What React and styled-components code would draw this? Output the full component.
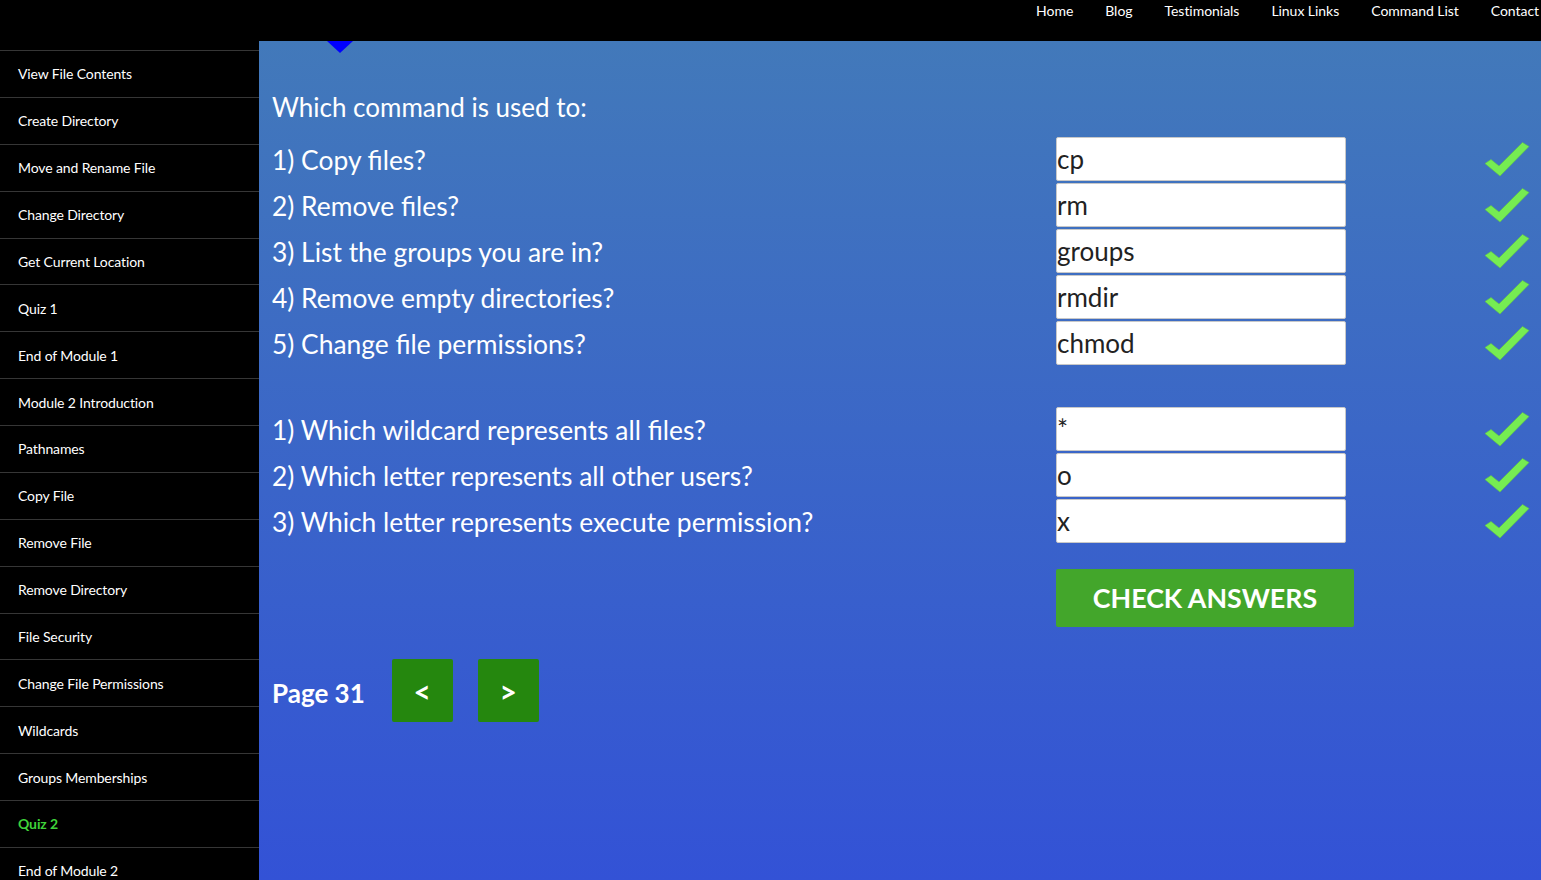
import styled, { createGlobalStyle } from "styled-components";

const GlobalStyle = createGlobalStyle`
  html, body {
    margin: 0;
    padding: 0;
    height: 100%;
    overflow: hidden;
    background: #000;
    font-family: Lato, "Open Sans", sans-serif;
  }
`;

const navLinks = ["Home", "Blog", "Testimonials", "Linux Links", "Command List", "Contact"];

const lessons = [
  "View File Contents",
  "Create Directory",
  "Move and Rename File",
  "Change Directory",
  "Get Current Location",
  "Quiz 1",
  "End of Module 1",
  "Module 2 Introduction",
  "Pathnames",
  "Copy File",
  "Remove File",
  "Remove Directory",
  "File Security",
  "Change File Permissions",
  "Wildcards",
  "Groups Memberships",
  "Quiz 2",
  "End of Module 2",
];

const groupOne = [
  ["1) Copy files?", "cp"],
  ["2) Remove files?", "rm"],
  ["3) List the groups you are in?", "groups"],
  ["4) Remove empty directories?", "rmdir"],
  ["5) Change file permissions?", "chmod"],
];

const groupTwo = [
  ["1) Which wildcard represents all files?", "*"],
  ["2) Which letter represents all other users?", "o"],
  ["3) Which letter represents execute permission?", "x"],
];

function Tick() {
  return (
    <Styled.Tick viewBox="0 0 46 36" aria-hidden="true">
      <path
        d="M1 22.5 L7 18.5 L15 25 L38.5 1.5 L45 5.5 L16 35 Z"
        fill="#76ec52"
        stroke="#62c942"
        strokeWidth="0.6"
        strokeLinejoin="round"
      />
    </Styled.Tick>
  );
}

function QuizGroup({ rows }) {
  return (
    <Styled.Grid>
      {rows.map(([question, answer]) => (
        <Styled.Row key={question}>
          <Styled.Question>{question}</Styled.Question>
          <Styled.Answer value={answer} readOnly />
          <Tick />
        </Styled.Row>
      ))}
    </Styled.Grid>
  );
}

export default function App() {
  return (
    <>
      <GlobalStyle />
      <Styled.TopBar>
        {navLinks.map((link) => (
          <Styled.NavLink key={link}>{link}</Styled.NavLink>
        ))}
      </Styled.TopBar>
      <Styled.Body>
        <Styled.Sidebar>
          {lessons.map((lesson) => (
            <Styled.Lesson key={lesson} $active={lesson === "Quiz 2"}>
              {lesson}
            </Styled.Lesson>
          ))}
        </Styled.Sidebar>
        <Styled.Main>
          <Styled.Pointer />
          <Styled.Title>Which command is used to:</Styled.Title>
          <QuizGroup rows={groupOne} />
          <Styled.Gap />
          <QuizGroup rows={groupTwo} />
          <Styled.Actions>
            <Styled.CheckButton>CHECK ANSWERS</Styled.CheckButton>
          </Styled.Actions>
          <Styled.Pager>
            <Styled.PageLabel>Page 31</Styled.PageLabel>
            <Styled.PageButton>&lt;</Styled.PageButton>
            <Styled.PageButton>&gt;</Styled.PageButton>
          </Styled.Pager>
        </Styled.Main>
      </Styled.Body>
    </>
  );
}

const Styled = {
  TopBar: styled.div`
    height: 41px;
    background: #000;
    display: flex;
    justify-content: flex-end;
    align-items: flex-start;
    gap: 32px;
    padding: 2px 2px 0 0;
    box-sizing: border-box;
  `,

  NavLink: styled.a`
    color: #fff;
    font-size: 14px;
    line-height: 17px;
    letter-spacing: -0.04px;
    cursor: pointer;
  `,

  Body: styled.div`
    display: flex;
    height: 839px;
  `,

  Sidebar: styled.nav`
    width: 259px;
    flex-shrink: 0;
    background: #000;
    padding-top: 9px;
    box-sizing: border-box;
    overflow: hidden;
  `,

  Lesson: styled.a`
    display: flex;
    align-items: center;
    height: 45.88px;
    padding: 0 0 1px 18px;
    box-sizing: content-box;
    margin-bottom: -1px;
    border-top: 1px solid #363636;
    color: ${({ $active }) => ($active ? "#3fd23a" : "#fff")};
    font-size: 14px;
    letter-spacing: -0.12px;
    font-weight: ${({ $active }) => ($active ? 700 : 400)};
    cursor: pointer;
  `,

  Main: styled.main`
    position: relative;
    flex: 1;
    padding: 43px 11px 0 13px;
    background: linear-gradient(to bottom, #4279ba 0%, #3352d6 100%);
    color: #fff;
  `,

  Pointer: styled.div`
    position: absolute;
    top: 0;
    left: 68px;
    border-left: 13px solid transparent;
    border-right: 13px solid transparent;
    border-top: 12px solid #0000ff;
  `,

  Title: styled.h2`
    margin: 0 0 6px;
    font-size: 26px;
    font-weight: 400;
    line-height: 46px;
  `,

  Grid: styled.div`
    display: grid;
    grid-template-columns: 784px 290px 1fr;
    grid-auto-rows: 46px;
    align-items: center;
  `,

  Row: styled.div`
    display: contents;
  `,

  Question: styled.div`
    font-size: 26.4px;
    line-height: 46px;
    padding-top: 2px;
  `,

  Answer: styled.input`
    height: 44px;
    box-sizing: border-box;
    border: 1px solid #c8c8c8;
    border-radius: 2px;
    padding: 0;
    font-family: Lato, "Open Sans", sans-serif;
    font-size: 26px;
    color: #222;
    background: #fff;
    outline: none;
  `,

  Tick: styled.svg`
    justify-self: end;
    width: 46px;
    height: 36px;
  `,

  Gap: styled.div`
    height: 40px;
  `,

  Actions: styled.div`
    padding: 25px 0 0 784px;
  `,

  CheckButton: styled.button`
    width: 298px;
    height: 58px;
    border: none;
    border-radius: 2px;
    background: #43a62b;
    color: #fff;
    font-family: Lato, "Open Sans", sans-serif;
    font-size: 26.8px;
    font-weight: 700;
    cursor: pointer;
  `,

  Pager: styled.div`
    display: flex;
    align-items: center;
    gap: 25px;
    margin-top: 32px;
  `,

  PageLabel: styled.span`
    font-size: 26px;
    font-weight: 700;
    margin-right: 2px;
    padding-top: 4px;
  `,

  PageButton: styled.button`
    width: 61px;
    height: 63px;
    border: none;
    border-radius: 2px;
    background: #25870e;
    color: #fff;
    font-family: Lato, "Open Sans", sans-serif;
    font-size: 30px;
    font-weight: 700;
    cursor: pointer;
  `,
};
